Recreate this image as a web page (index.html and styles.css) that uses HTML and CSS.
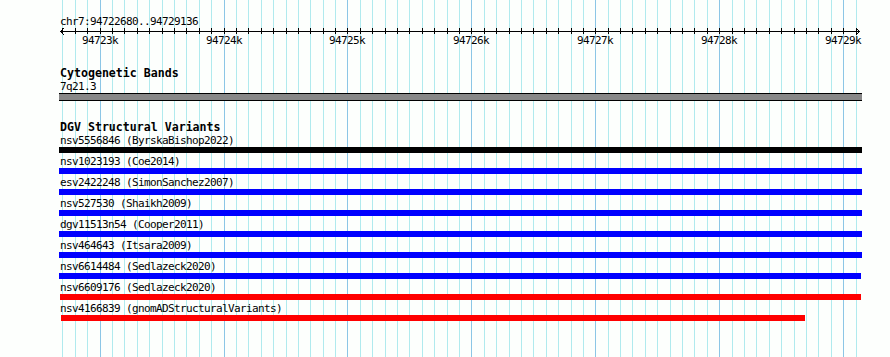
FILE: index.html
```html
<!DOCTYPE html>
<html lang="en">
<head>
  <meta charset="UTF-8">
  <meta name="viewport" content="width=device-width, initial-scale=1.0">
  <title>chr7:94722680..94729136</title>
  <link rel="stylesheet" href="styles.css">
</head>
<body>
  <div class="browser">
    <svg class="grid" id="grid"></svg>

    <div class="overview">
      <div class="location">chr7:94722680..94729136</div>
      <svg class="ruler" id="ruler" width="801" height="6"></svg>
      <div class="ruler-labels" id="rulerLabels"></div>
    </div>

    <div class="track track-bands">
      <div class="track-title">Cytogenetic Bands</div>
      <div class="feature">
        <div class="feature-label">7q21.3</div>
        <div class="band" style="margin-left:-1px;width:803px"></div>
      </div>
    </div>

    <div class="track track-dgv">
      <div class="track-title">DGV Structural Variants</div>
      <div class="feature">
        <div class="feature-label">nsv5556846 (ByrskaBishop2022)</div>
        <div class="bar bar-black" style="margin-left:-1px;width:803px"></div>
      </div>
      <div class="feature">
        <div class="feature-label">nsv1023193 (Coe2014)</div>
        <div class="bar bar-blue" style="margin-left:-1px;width:803px"></div>
      </div>
      <div class="feature">
        <div class="feature-label">esv2422248 (SimonSanchez2007)</div>
        <div class="bar bar-blue" style="margin-left:-1px;width:803px"></div>
      </div>
      <div class="feature">
        <div class="feature-label">nsv527530 (Shaikh2009)</div>
        <div class="bar bar-blue" style="margin-left:-1px;width:803px"></div>
      </div>
      <div class="feature">
        <div class="feature-label">dgv11513n54 (Cooper2011)</div>
        <div class="bar bar-blue" style="margin-left:-1px;width:803px"></div>
      </div>
      <div class="feature">
        <div class="feature-label">nsv464643 (Itsara2009)</div>
        <div class="bar bar-blue" style="margin-left:-1px;width:803px"></div>
      </div>
      <div class="feature">
        <div class="feature-label">nsv6614484 (Sedlazeck2020)</div>
        <div class="bar bar-blue" style="margin-left:-1px;width:802px"></div>
      </div>
      <div class="feature">
        <div class="feature-label">nsv6609176 (Sedlazeck2020)</div>
        <div class="bar bar-red" style="margin-left:0;width:801px"></div>
      </div>
      <div class="feature">
        <div class="feature-label">nsv4166839 (gnomADStructuralVariants)</div>
        <div class="bar bar-red" style="margin-left:1px;width:744px"></div>
      </div>
    </div>
  </div>

  <script>
    // Visible region
    const viewStart = 94722680;
    const viewEnd = 94729136;
    const trackLeft = 60;
    const trackWidth = 800;
    const scale = trackWidth / (viewEnd - viewStart);
    const svgNS = 'http://www.w3.org/2000/svg';

    function toX(bp) {
      return Math.round(trackLeft + (bp - viewStart) * scale);
    }

    function svgEl(name, attrs) {
      const el = document.createElementNS(svgNS, name);
      for (const key in attrs) {
        el.setAttribute(key, attrs[key]);
      }
      return el;
    }

    const grid = document.getElementById('grid');
    const ruler = document.getElementById('ruler');
    const rulerLabels = document.getElementById('rulerLabels');

    // Ruler baseline and arrow heads
    ruler.appendChild(svgEl('line', { x1: 0, y1: 3.5, x2: 800, y2: 3.5, class: 'ruler-line' }));
    ruler.appendChild(svgEl('polyline', { points: '4,0 0.5,3.5 4,7', class: 'ruler-line' }));
    ruler.appendChild(svgEl('polyline', { points: '796,0 799.5,3.5 796,7', class: 'ruler-line' }));

    // Grid lines, ticks and labels every 100bp
    const firstTick = Math.ceil(viewStart / 100) * 100;
    for (let bp = firstTick; bp < viewEnd; bp += 100) {
      const x = toX(bp);
      const major = bp % 1000 === 0;

      grid.appendChild(svgEl('rect', {
        x: x, y: 0, width: 1, height: '100%',
        class: major ? 'grid-major' : 'grid-minor'
      }));

      const tx = x - trackLeft + 0.5;
      ruler.appendChild(svgEl('line', { x1: tx, y1: 0, x2: tx, y2: 6, class: 'ruler-line' }));

      if (major) {
        const label = document.createElement('div');
        label.className = 'ruler-label';
        label.style.left = (x - trackLeft) + 'px';
        label.textContent = (bp / 1000) + 'k';
        rulerLabels.appendChild(label);
      }
    }
  </script>
</body>
</html>
```

FILE: styles.css
```css
body {
  margin: 0;
  background-color: #fdfffd;
  color: #000000;
  font-family: "DejaVu Sans Mono", "Liberation Mono", monospace;
  font-size: 11px;
  letter-spacing: -0.62px;
}

.browser {
  position: relative;
  min-height: 100vh;
  box-sizing: border-box;
  padding: 15px 0 0 60px;
  overflow: hidden;
}

.grid {
  position: absolute;
  top: 0;
  left: 0;
  width: 100%;
  height: 100%;
}

.grid-minor {
  fill: #b0eaee;
}

.grid-major {
  fill: #8cc6e6;
}

.overview,
.track {
  position: relative;
  width: 800px;
}

.location {
  height: 13px;
  line-height: 13px;
  white-space: nowrap;
}

.ruler {
  display: block;
  overflow: visible;
}

.ruler-line {
  fill: none;
  stroke: #000000;
  stroke-width: 1;
}

.ruler-labels {
  position: relative;
  height: 13px;
  line-height: 13px;
}

.ruler-label {
  position: absolute;
  top: 0;
  transform: translateX(-50%);
  white-space: nowrap;
}

.track-bands {
  margin-top: 22px;
}

.track-dgv {
  margin-top: 22px;
}

.track-title {
  font-weight: bold;
  font-size: 11.6px;
  letter-spacing: 0;
  line-height: 9px;
  height: 9px;
  white-space: nowrap;
}

.feature-label {
  height: 13px;
  line-height: 13px;
  padding-top: 2px;
  white-space: nowrap;
}

.band {
  height: 6px;
  background-color: #888888;
  border-top: 1px solid #000000;
  border-bottom: 1px solid #000000;
}

.bar {
  height: 6px;
}

.bar-black {
  background-color: #000000;
}

.bar-blue {
  background-color: #0000ff;
}

.bar-red {
  background-color: #ff0000;
}
```
